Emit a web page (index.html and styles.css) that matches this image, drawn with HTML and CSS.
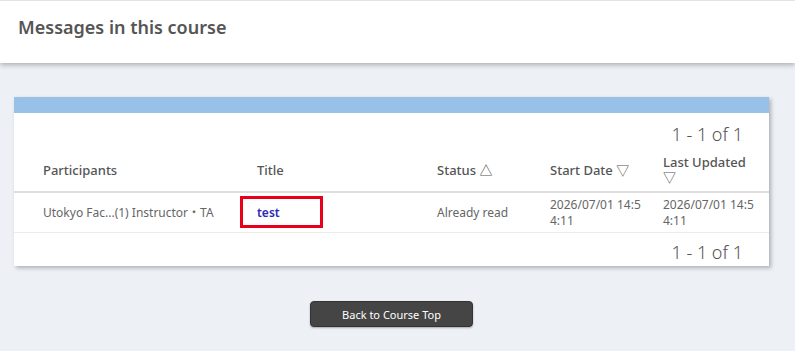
FILE: index.html
```html
<!DOCTYPE html>
<html>
<head>
<meta charset="utf-8">
<link rel="stylesheet" href="styles.css">
</head>
<body>
<header class="page-header">
  <h1 class="page-title">Messages in this course</h1>
</header>
<main class="content">
  <section class="card">
    <div class="card-bar"></div>
    <div class="pager">1 - 1 of 1</div>
    <table class="msg-table">
      <colgroup>
        <col class="c1"><col class="c2"><col class="c3"><col class="c4"><col class="c5">
      </colgroup>
      <thead>
        <tr>
          <th class="first">Participants</th>
          <th>Title</th>
          <th>Status △</th>
          <th>Start Date ▽</th>
          <th>Last Updated ▽</th>
        </tr>
      </thead>
      <tbody>
        <tr>
          <td class="first">Utokyo Fac...(1) Instructor・TA</td>
          <td class="title-cell"><a class="title-link" href="#">test</a><span class="highlight"></span></td>
          <td>Already read</td>
          <td class="date">2026/07/01 14:54:11</td>
          <td class="date">2026/07/01 14:54:11</td>
        </tr>
      </tbody>
    </table>
    <div class="pager pager-bottom">1 - 1 of 1</div>
  </section>
  <div class="actions">
    <button class="back-btn" type="button">Back to Course Top</button>
  </div>
</main>
</body>
</html>
```
FILE: styles.css
```css
html, body {
  margin: 0;
  padding: 0;
}
body {
  background: #edf1f6;
  font-family: "Noto Sans", "Noto Sans CJK JP", sans-serif;
  color: #555;
  height: 351px;
  overflow: hidden;
}
.page-header {
  background: #fff;
  border-top: 1px solid #e3e3e3;
  height: 62px;
  box-shadow: 0 2px 5px rgba(0, 0, 0, 0.28);
  display: flex;
  align-items: center;
  position: relative;
}
.page-title {
  margin: 0 0 10px 18px;
  font-size: 18px;
  font-weight: 600;
  color: #555;
}
.content {
  padding: 34px 26px 0 14px;
}
.card {
  background: #fff;
  box-shadow: 2px 2px 4px rgba(0, 0, 0, 0.28);
}
.card-bar {
  height: 16px;
  background: #98c1e7;
}
.pager {
  height: 30px;
  padding-top: 6px;
  display: flex;
  align-items: center;
  justify-content: flex-end;
  padding-right: 26px;
  font-size: 18px;
  font-weight: 300;
  color: #555;
}
.pager-bottom {
  height: 28px;
  padding-top: 5px;
}
.msg-table {
  width: 100%;
  border-collapse: collapse;
  table-layout: fixed;
}
.c1 { width: 235px; }
.c2 { width: 180px; }
.c3 { width: 113px; }
.c4 { width: 113px; }
.c5 { width: 114px; }
.msg-table th {
  text-align: left;
  font-size: 13px;
  font-weight: 500;
  color: #555;
  height: 42px;
  padding: 0 8px;
  line-height: 15px;
  vertical-align: middle;
  border-bottom: 2px solid #dedede;
}
.msg-table td {
  font-size: 12px;
  color: #666;
  height: 39px;
  padding: 0 8px;
  line-height: 16px;
  vertical-align: middle;
  border-bottom: 1px solid #ececec;
}
.msg-table .first {
  padding-left: 29px;
}
.date {
  word-break: break-all;
}
.title-cell {
  position: relative;
}
.title-link {
  color: #2a2ab5;
  font-weight: 600;
  text-decoration: none;
  font-size: 12px;
}
.highlight {
  position: absolute;
  left: -9px;
  top: 3px;
  width: 77px;
  height: 26px;
  border: 3px solid #e8001a;
}
.actions {
  display: flex;
  justify-content: center;
  padding-top: 35px;
}
.back-btn {
  width: 163px;
  height: 26px;
  background: #454545;
  color: #fff;
  border: 1px solid #333;
  border-radius: 4px;
  font-family: "Noto Sans", sans-serif;
  font-size: 11px;
  box-shadow: 0 1px 2px rgba(0, 0, 0, 0.3);
  padding: 0;
}
```
